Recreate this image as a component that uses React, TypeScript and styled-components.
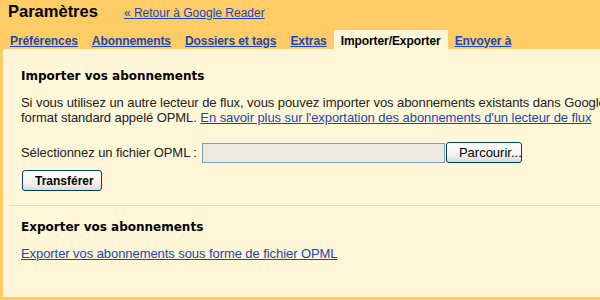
import styled, { createGlobalStyle } from "styled-components";

const Global = createGlobalStyle`
  html, body {
    margin: 0;
    padding: 0;
    background: #ffcc66;
  }
  body {
    font-family: "Liberation Sans", Arial, sans-serif;
    font-size: 13px;
    color: #222222;
  }
`;

const Page = styled.div`
  width: 600px;
  height: 300px;
  overflow: hidden;
  background: #ffcc66;
`;

const Header = styled.div`
  display: flex;
  align-items: baseline;
  gap: 26px;
  height: 30px;
  padding: 2px 0 0 8px;
  box-sizing: border-box;
`;

const Title = styled.h1`
  margin: 0;
  font-size: 16.5px;
  font-weight: bold;
  color: #000000;
`;

const Link = styled.a<{ $bold?: boolean }>`
  color: #2244bb;
  text-decoration: underline;
  font-weight: ${(p) => (p.$bold ? "bold" : "normal")};
  cursor: pointer;
`;

const Back = styled(Link)`
  font-size: 12px;
`;

const Tabs = styled.div`
  display: flex;
  align-items: stretch;
  height: 19px;
  padding-left: 3px;
  font-size: 12px;
  white-space: nowrap;
  letter-spacing: -0.08px;
`;

const Tab = styled.div<{ $active?: boolean }>`
  display: flex;
  align-items: center;
  padding: 2px 7px 0;
  background: ${(p) => (p.$active ? "#fff7d7" : "transparent")};
  font-weight: bold;
  color: #000000;
`;

const Panel = styled.div`
  margin-left: 3px;
  background: #fff7d7;
  height: 248px;
  box-sizing: border-box;
  white-space: nowrap;
  letter-spacing: -0.07px;
`;

const Section = styled.section<{ $divider?: boolean }>`
  margin: 0 0 0 6px;
  padding: ${(p) => (p.$divider ? "14px" : "20px")} 0 14px 12px;
  border-top: ${(p) => (p.$divider ? "1px solid #ffd77e" : "none")};
`;

const Heading = styled.h2`
  margin: 0 0 12px;
  font-family: "DejaVu Sans", Verdana, sans-serif;
  font-size: 12px;
  font-weight: bold;
  letter-spacing: 0;
  color: #000000;
`;

const Text = styled.p`
  margin: 0;
  line-height: 15px;
  font-size: 13px;
`;

const FileRow = styled.div`
  display: flex;
  align-items: center;
  margin-top: 17px;
`;

const Label = styled.span`
  margin-right: 5px;
`;

const FileField = styled.div`
  width: 241px;
  height: 18px;
  border: 1px solid #7f9db9;
  background: #ebe9e2;
`;

const Button = styled.button<{ $bold?: boolean }>`
  height: 21px;
  padding: 0 12px;
  border: 1px solid #003c74;
  border-radius: 3px;
  background: linear-gradient(#ffffff 0%, #f4f4f0 60%, #dcdad2 100%);
  font-family: "Liberation Sans", Arial, sans-serif;
  font-size: 12px;
  font-weight: ${(p) => (p.$bold ? "bold" : "normal")};
  color: #000000;
  box-sizing: border-box;
`;

const Browse = styled(Button)`
  width: 76px;
  margin-left: 1px;
  font-size: 13px;
`;

const Submit = styled(Button)`
  display: block;
  width: 80px;
  margin-top: 7px;
  margin-left: 1px;
`;

const ExportLink = styled(Link)`
  display: block;
  font-size: 13px;
`;

const tabs = [
  "Préférences",
  "Abonnements",
  "Dossiers et tags",
  "Extras",
  "Importer/Exporter",
  "Envoyer à",
];

export default function App() {
  return (
    <Page>
      <Global />
      <Header>
        <Title>Paramètres</Title>
        <Back>« Retour à Google Reader</Back>
      </Header>
      <Tabs>
        {tabs.map((t) =>
          t === "Importer/Exporter" ? (
            <Tab key={t} $active>
              {t}
            </Tab>
          ) : (
            <Tab key={t}>
              <Link $bold>{t}</Link>
            </Tab>
          )
        )}
      </Tabs>
      <Panel>
        <Section>
          <Heading>Importer vos abonnements</Heading>
          <Text>
            Si vous utilisez un autre lecteur de flux, vous pouvez importer vos
            abonnements existants dans Google Reader. Il suffit d'utiliser le
            <br />
            format standard appelé OPML.{" "}
            <Link>En savoir plus sur l'exportation des abonnements d'un lecteur de flux</Link>
          </Text>
          <FileRow>
            <Label>Sélectionnez un fichier OPML :</Label>
            <FileField />
            <Browse>Parcourir...</Browse>
          </FileRow>
          <Submit $bold>Transférer</Submit>
        </Section>
        <Section $divider>
          <Heading>Exporter vos abonnements</Heading>
          <ExportLink>Exporter vos abonnements sous forme de fichier OPML</ExportLink>
        </Section>
      </Panel>
    </Page>
  );
}
